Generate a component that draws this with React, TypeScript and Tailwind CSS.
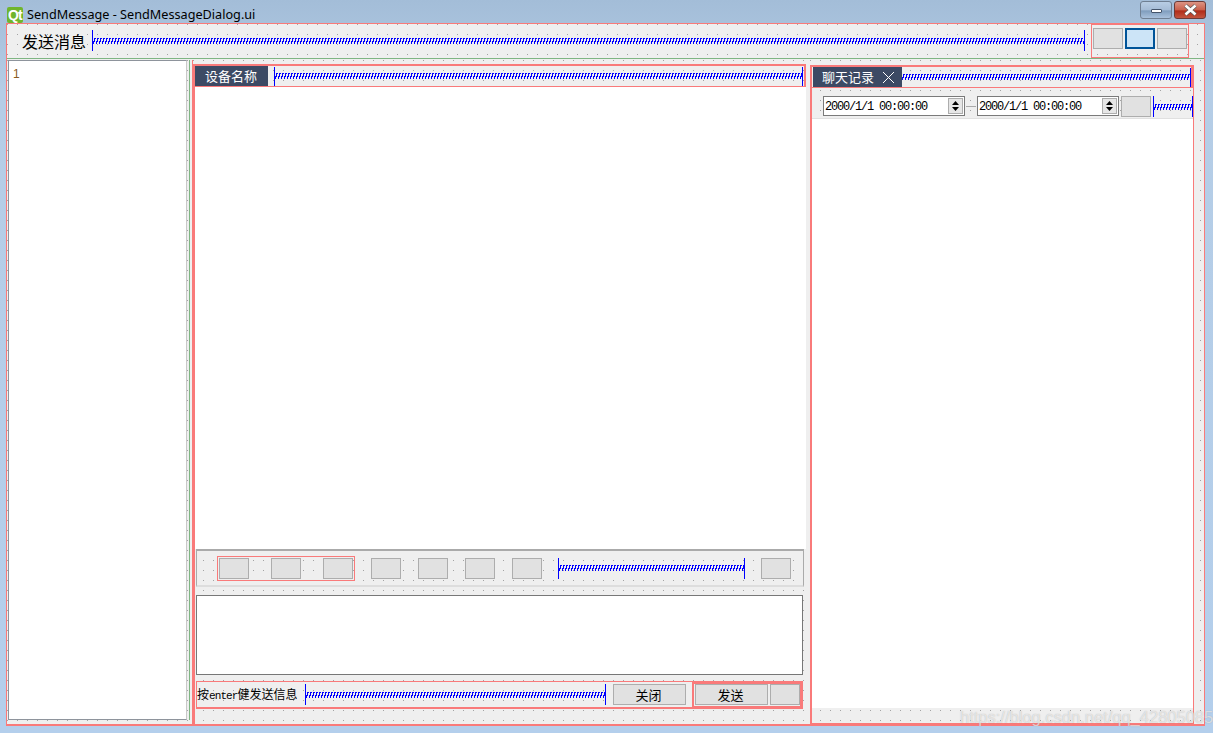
const dots = "bg-[#efefef] bg-[conic-gradient(at_1px_1px,transparent_75%,#a3a3a3_0)] bg-[size:10px_10px]";
const cjk = "font-['Noto_Sans_CJK_SC','Noto_Sans',sans-serif]";

function Spring({ className = "" }: { className?: string }) {
  return (
    <div className={`flex h-[21px] items-center border-x border-[#0000ff] ${className}`}>
      <svg className="block h-[6px] w-full" shapeRendering="crispEdges">
        <defs>
          <pattern id="spring-coil" width="3" height="6" patternUnits="userSpaceOnUse">
            <rect x="1" y="0" width="1" height="4" fill="#0000ff" />
            <rect x="0" y="3" width="1" height="3" fill="#0000ff" />
            <rect x="2" y="0" width="1" height="1" fill="#0000ff" />
          </pattern>
        </defs>
        <rect width="100%" height="6" fill="url(#spring-coil)" />
      </svg>
    </div>
  );
}

function Btn({ className = "", children }: { className?: string; children?: React.ReactNode }) {
  return (
    <div className={`flex h-[21px] w-[30px] shrink-0 items-center justify-center border border-[#adadad] bg-[#e1e1e1] text-[13px] text-black ${cjk} ${className}`}>
      {children}
    </div>
  );
}

function Tag({ children, className = "" }: { children: React.ReactNode; className?: string }) {
  return (
    <div className={`flex h-[20px] shrink-0 items-center bg-[#3c4a64] text-[13px] text-white ${cjk} ${className}`}>
      {children}
    </div>
  );
}

function DateEdit() {
  return (
    <div className="flex h-[20px] w-[142px] shrink-0 items-center justify-between border border-[#7a7a7a] bg-white pl-[1px] pr-[1px]">
      <span className="pt-[1px] font-['Liberation_Mono',monospace] text-[12px] tracking-[-1.2px] text-black">2000/1/1 00:00:00</span>
      <div className="flex h-[16px] w-[15px] flex-col items-center justify-center gap-[2px] border border-[#adadad] bg-[#e6e6e6]">
        <svg width="7" height="4" viewBox="0 0 7 4"><path d="M3.5 0L7 4H0z" fill="#000" /></svg>
        <svg width="7" height="4" viewBox="0 0 7 4"><path d="M0 0h7L3.5 4z" fill="#000" /></svg>
      </div>
    </div>
  );
}

export default function App() {
  return (
    <div className="relative flex h-[733px] w-[1213px] flex-col overflow-hidden bg-[linear-gradient(180deg,#a3bdd8_0,#b5cde6_90px,#b4cfec_100%)]">
      {/* title bar */}
      <div className="flex h-[23px] shrink-0 items-center pl-[7px] pr-[7px]">
        <div className="mt-[6px] flex h-[16px] w-[16px] items-center justify-center rounded-[2px] bg-[#6fb52c] font-['Liberation_Sans',sans-serif] text-[14px] font-bold leading-none tracking-[-0.8px] text-white">
          Qt
        </div>
        <span className="ml-[4px] mt-[6px] font-['Noto_Sans',sans-serif] text-[12.67px] text-black">SendMessage - SendMessageDialog.ui</span>
        <div className="mb-[3px] ml-auto flex gap-[2px]">
          <div className="flex h-[18px] w-[32px] items-center justify-center rounded-[3px] border border-[#6f7f92] bg-[linear-gradient(180deg,#b8cde4_0,#a5bcd6_50%,#7f9dbd_55%,#a9c1dc_100%)]">
            <div className="mt-[2px] h-[4px] w-[11px] rounded-[1px] border border-[#44546a] bg-white" />
          </div>
          <div className="flex h-[18px] w-[32px] items-center justify-center rounded-[3px] border border-[#6b3b38] bg-[linear-gradient(180deg,#dc9484_0,#c9604c_50%,#b02c18_55%,#c25540_100%)]">
            <svg width="15" height="12" viewBox="0 0 15 12">
              <path d="M2.5 1.5l10 9M12.5 1.5l-10 9" stroke="#5a5a5a" strokeWidth="4" />
              <path d="M2.5 1.5l10 9M12.5 1.5l-10 9" stroke="#fff" strokeWidth="2.6" />
            </svg>
          </div>
        </div>
      </div>

      {/* client area */}
      <div className="mx-[6px] flex h-[703px] w-[1199px] flex-col border border-b-2 border-[#f97a7a] bg-[#efefef]">
        {/* top row */}
        <div className={`flex h-[35px] shrink-0 items-stretch border-b border-[#7fb583] pl-[15px] ${dots}`}>
          <span className={`flex w-[70px] items-center text-[16px] text-black ${cjk}`}>发送消息</span>
          <Spring className="mt-[6px] flex-1" />
          <div className="ml-[6px] mr-[15px] flex w-[98px] items-start gap-[2px] border border-[#f97a7a] px-[1px] pt-[3px]">
            <Btn />
            <Btn className="!border-2 !border-[#005499] !bg-[#cce4f7]" />
            <Btn />
          </div>
        </div>

        {/* main */}
        <div className="flex min-h-0 flex-1 pt-[1px]">
          <div className={`flex w-[185px] shrink-0 pb-[4px] pl-[1px] ${dots}`}>
            <div className="h-full w-[179px] border border-[#8e949c] border-r-[#c9c9c9] bg-white pl-[4px] font-['Liberation_Sans',sans-serif] text-[12px] leading-[26px] text-[#8a5a20]">
              1
            </div>
            <div className="ml-[2px] w-px bg-[#7fb583]" />
          </div>

          {/* center column */}
          <div className={`flex w-[618px] shrink-0 flex-col border-l border-[#f97a7a] pt-[4px] ${dots}`}>
            <div className="flex h-[23px] w-[613px] shrink-0 items-center border-2 border-b border-[#f97a7a] pr-[1px]">
              <Tag className="w-[73px] pl-[10px]">设备名称</Tag>
              <Spring className="ml-[6px] flex-1 !h-[19px]" />
            </div>
            <div className="h-[462px] w-[613px] shrink-0 border-l-2 border-[#f97a7a] bg-white" />
            <div className="flex w-[613px] flex-1 flex-col border-l-2 border-[#f97a7a] pl-[1px]">
              <div className="flex h-[38px] w-[608px] shrink-0 items-center border-x border-t-2 border-b-2 border-[#ddd] border-t-[#aaa] border-x-[#aaa] pl-[20px]">
                <div className="flex h-[25px] w-[138px] shrink-0 items-center justify-between border border-[#f97a7a] px-[1px]">
                  <Btn />
                  <Btn />
                  <Btn />
                </div>
                <Btn className="ml-[16px]" />
                <Btn className="ml-[17px]" />
                <Btn className="ml-[17px]" />
                <Btn className="ml-[17px]" />
                <Spring className="ml-[16px] w-[187px]" />
                <Btn className="ml-[16px]" />
              </div>
              <div className="mt-[8px] h-[80px] w-[607px] shrink-0 border border-[#777] bg-white" />
              <div className="mt-[6px] flex h-[28px] w-[607px] shrink-0 items-center border border-b-2 border-[#f97a7a]">
                <span className={`w-[108px] whitespace-nowrap text-[12px] text-black ${cjk}`}>
                  按<span className="font-['Liberation_Mono',monospace] text-[11px] tracking-[-0.9px]">enter</span>健发送信息
                </span>
                <Spring className="w-[301px]" />
                <Btn className="ml-[7px] w-[73px] pr-[2px]">关闭</Btn>
                <div className="ml-[6px] flex h-[26px] flex-1 items-center gap-[2px] border-2 border-[#f97a7a] pl-[1px]">
                  <Btn className="w-[73px] pr-[2px]">发送</Btn>
                  <Btn />
                </div>
              </div>
            </div>
          </div>

          {/* right column */}
          <div className={`flex flex-1 flex-col pt-[5px] pr-[10px] ${dots}`}>
            <div className="flex h-full flex-col border border-l-2 border-t-0 border-[#f97a7a]">
              <div className="flex h-[23px] shrink-0 items-center border-2 border-l-0 border-b border-[#f97a7a] pl-[1px]">
                <Tag className="w-[89px] pl-[9px]">
                  聊天记录
                  <svg className="ml-[8px]" width="13" height="13" viewBox="0 0 13 13">
                    <path d="M1 1l11 11M12 1L1 12" stroke="#fff" strokeWidth="1" />
                  </svg>
                </Tag>
                <Spring className="flex-1 !h-[19px] !border-l-0" />
              </div>
              <div className="flex h-[31px] shrink-0 items-start border-b border-[#e0e0e0] pl-[11px] pt-[8px]">
                <DateEdit />
                <div className="mx-[1px] mt-[10px] h-px w-[10px] bg-[#aaa]" />
                <DateEdit />
                <Btn className="ml-[2px]" />
                <Spring className="ml-[2px] flex-1" />
              </div>
              <div className="min-h-0 flex-1 bg-white" />
              <div className="h-[15px] shrink-0" />
            </div>
          </div>
        </div>
      </div>

      {/* watermark */}
      <span className="absolute left-[960px] top-[705px] whitespace-nowrap font-['Liberation_Sans',sans-serif] text-[16.5px] text-white/60 [text-shadow:0_0_1px_rgba(120,120,120,0.5)]">
        https://blog.csdn.net/qq_42805085
      </span>
    </div>
  );
}
